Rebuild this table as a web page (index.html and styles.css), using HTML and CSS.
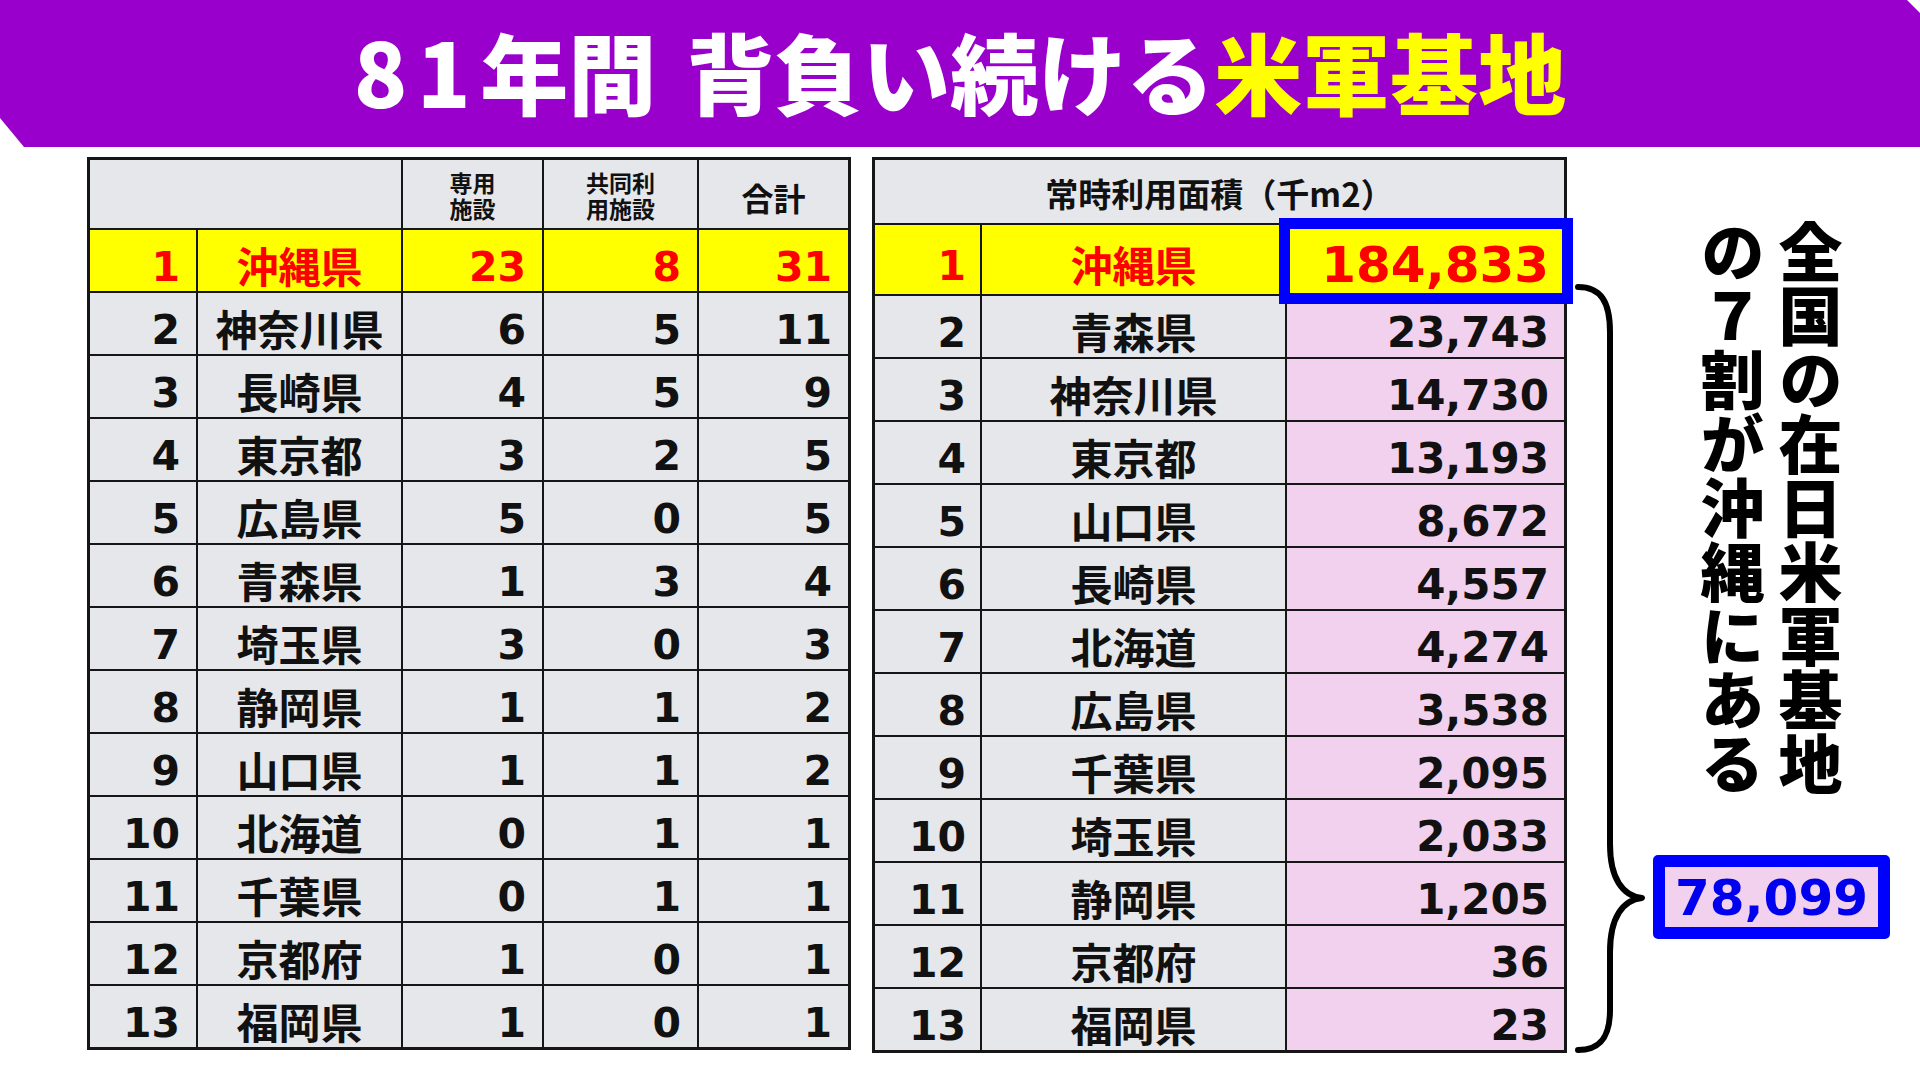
FILE: index.html
```html
<!DOCTYPE html>
<html lang="ja">
<head>
<meta charset="utf-8">
<title>81年間 背負い続ける米軍基地</title>
<link rel="stylesheet" href="styles.css">
</head>
<body>
<header class="banner">
  <h1 class="title"><span class="t-num">81</span>年間<span class="t-sp"></span>背負い続ける<span class="t-yel">米軍基地</span></h1>
</header>
<main class="content">
  <div class="tbl tbl-left">
    <div class="cell span2"></div>
    <div class="cell hd"><span class="hd-line">専用</span><span class="hd-line">施設</span></div>
    <div class="cell hd"><span class="hd-line">共同利</span><span class="hd-line">用施設</span></div>
    <div class="cell hd-lg">合計</div>

    <div class="cell num hl">1</div><div class="cell name hl">沖縄県</div><div class="cell num hl">23</div><div class="cell num hl">8</div><div class="cell num hl">31</div>
    <div class="cell num">2</div><div class="cell name">神奈川県</div><div class="cell num">6</div><div class="cell num">5</div><div class="cell num">11</div>
    <div class="cell num">3</div><div class="cell name">長崎県</div><div class="cell num">4</div><div class="cell num">5</div><div class="cell num">9</div>
    <div class="cell num">4</div><div class="cell name">東京都</div><div class="cell num">3</div><div class="cell num">2</div><div class="cell num">5</div>
    <div class="cell num">5</div><div class="cell name">広島県</div><div class="cell num">5</div><div class="cell num">0</div><div class="cell num">5</div>
    <div class="cell num">6</div><div class="cell name">青森県</div><div class="cell num">1</div><div class="cell num">3</div><div class="cell num">4</div>
    <div class="cell num">7</div><div class="cell name">埼玉県</div><div class="cell num">3</div><div class="cell num">0</div><div class="cell num">3</div>
    <div class="cell num">8</div><div class="cell name">静岡県</div><div class="cell num">1</div><div class="cell num">1</div><div class="cell num">2</div>
    <div class="cell num">9</div><div class="cell name">山口県</div><div class="cell num">1</div><div class="cell num">1</div><div class="cell num">2</div>
    <div class="cell num">10</div><div class="cell name">北海道</div><div class="cell num">0</div><div class="cell num">1</div><div class="cell num">1</div>
    <div class="cell num">11</div><div class="cell name">千葉県</div><div class="cell num">0</div><div class="cell num">1</div><div class="cell num">1</div>
    <div class="cell num">12</div><div class="cell name">京都府</div><div class="cell num">1</div><div class="cell num">0</div><div class="cell num">1</div>
    <div class="cell num">13</div><div class="cell name">福岡県</div><div class="cell num">1</div><div class="cell num">0</div><div class="cell num">1</div>
  </div>

  <div class="tbl tbl-right">
    <div class="cell span3 hd-area">常時利用面積（千m2）</div>

    <div class="cell num rk hl">1</div><div class="cell name hl">沖縄県</div><div class="cell num val big hl framed">184,833</div>
    <div class="cell num rk">2</div><div class="cell name">青森県</div><div class="cell num val pk">23,743</div>
    <div class="cell num rk">3</div><div class="cell name">神奈川県</div><div class="cell num val pk">14,730</div>
    <div class="cell num rk">4</div><div class="cell name">東京都</div><div class="cell num val pk">13,193</div>
    <div class="cell num rk">5</div><div class="cell name">山口県</div><div class="cell num val pk">8,672</div>
    <div class="cell num rk">6</div><div class="cell name">長崎県</div><div class="cell num val pk">4,557</div>
    <div class="cell num rk">7</div><div class="cell name">北海道</div><div class="cell num val pk">4,274</div>
    <div class="cell num rk">8</div><div class="cell name">広島県</div><div class="cell num val pk">3,538</div>
    <div class="cell num rk">9</div><div class="cell name">千葉県</div><div class="cell num val pk">2,095</div>
    <div class="cell num rk">10</div><div class="cell name">埼玉県</div><div class="cell num val pk">2,033</div>
    <div class="cell num rk">11</div><div class="cell name">静岡県</div><div class="cell num val pk">1,205</div>
    <div class="cell num rk">12</div><div class="cell name">京都府</div><div class="cell num val pk">36</div>
    <div class="cell num rk">13</div><div class="cell name">福岡県</div><div class="cell num val pk">23</div>
  </div>

  <svg class="brace" width="70" height="772" viewBox="0 0 70 772" aria-hidden="true">
    <path d="M3,3 C26,3 35,18 35,48 L35,560 C35,595 48,612 67,614 C48,616 35,633 35,668 L35,726 C35,752 26,766 3,766" fill="none" stroke="#000" stroke-width="6" stroke-linecap="round" stroke-linejoin="round"/>
  </svg>

  <div class="note">
    <p class="vtext">全国の在日米軍基地<br>の７割が沖縄にある</p>
    <div class="total">78,099</div>
  </div>
</main>
</body>
</html>
```

FILE: styles.css
```css
html, body {
  margin: 0;
  padding: 0;
}

body {
  width: 1920px;
  height: 1080px;
  overflow: hidden;
  background: #ffffff;
  color: #111111;
  font-family: "Noto Sans CJK JP", "Noto Sans", sans-serif;
}

/* ---------- banner ---------- */
.banner {
  height: 147px;
  background: #9900cc;
  clip-path: polygon(0 0, 1907px 0, 1920px 13px, 1920px 147px, 24px 147px, 0 118px);
  display: flex;
  align-items: center;
  justify-content: center;
}

.title {
  margin: 0;
  padding-bottom: 8px;
  font-family: "Noto Sans CJK JP", sans-serif;
  font-size: 88px;
  font-weight: 900;
  line-height: 1;
  color: #ffffff;
  white-space: nowrap;
}

.t-num {
  letter-spacing: 0.11em;
}

.t-sp {
  display: inline-block;
  width: 0.34em;
}

.t-yel {
  color: #ffff00;
}

/* ---------- layout ---------- */
.content {
  display: flex;
  align-items: flex-start;
  padding: 10px 0 0 87px;
}

/* ---------- tables ---------- */
.tbl {
  display: grid;
  gap: 2px;
  border: 3px solid #161616;
  background: #161616;
}

.tbl-left {
  grid-template-columns: 106px 203px 139px 153px 149px;
  grid-template-rows: 68px repeat(13, 61px);
}

.tbl-right {
  margin-left: 21px;
  grid-template-columns: 105px 303px 277px;
  grid-template-rows: 63px 69px repeat(12, 61px);
}

.cell {
  box-sizing: border-box;
  min-width: 0;
  background: #e5e7ea;
  display: flex;
  align-items: center;
  justify-content: center;
  padding-top: 8px;
  line-height: 1;
  font-weight: 700;
  white-space: nowrap;
}

.span2 {
  grid-column: span 2;
}

.span3 {
  grid-column: span 3;
}

.hd {
  flex-direction: column;
  padding-top: 6px;
  font-family: "Liberation Sans", "Noto Sans CJK JP", sans-serif;
  font-size: 23px;
  line-height: 26px;
}

.hd-line {
  display: block;
  height: 26px;
}

.hd-lg {
  padding-top: 6px;
  font-size: 32px;
}

.hd-area {
  font-size: 33px;
  padding-top: 4px;
}

.name {
  font-size: 42px;
}

.num {
  justify-content: flex-end;
  padding-top: 13px;
  padding-right: 16px;
  font-family: "DejaVu Sans", sans-serif;
  font-size: 41px;
}

.rk {
  padding-right: 14px;
}

.val {
  font-size: 42px;
  padding-right: 15px;
}

.big {
  font-size: 50px;
  padding-top: 10px;
}

.hl {
  background: #ffff00;
  color: #ff0000;
}

.pk {
  background: #f2d1ee;
}

.framed {
  position: relative;
  z-index: 1;
}

.framed::after {
  content: "";
  position: absolute;
  top: -7px;
  left: -8px;
  right: -9px;
  bottom: -10px;
  border: 11px solid #0000ff;
}

/* ---------- annotation ---------- */
.brace {
  display: block;
  flex: none;
  margin: 127px 0 0 8px;
}

.note {
  flex: none;
  width: 237px;
  margin: 63px 0 0 8px;
  display: flex;
  flex-direction: column;
  align-items: center;
}

.vtext {
  margin: 0;
  writing-mode: vertical-rl;
  height: 576px;
  font-size: 64px;
  font-weight: 900;
  line-height: 78px;
  color: #000000;
  white-space: nowrap;
}

.total {
  box-sizing: border-box;
  width: 237px;
  height: 84px;
  margin-top: 59px;
  border: 12px solid #0000ff;
  border-radius: 5px;
  background: #f2d1ee;
  color: #0000ee;
  display: flex;
  align-items: center;
  justify-content: center;
  padding-top: 2px;
  font-family: "DejaVu Sans", sans-serif;
  font-weight: 700;
  font-size: 50px;
  line-height: 1;
}
```
